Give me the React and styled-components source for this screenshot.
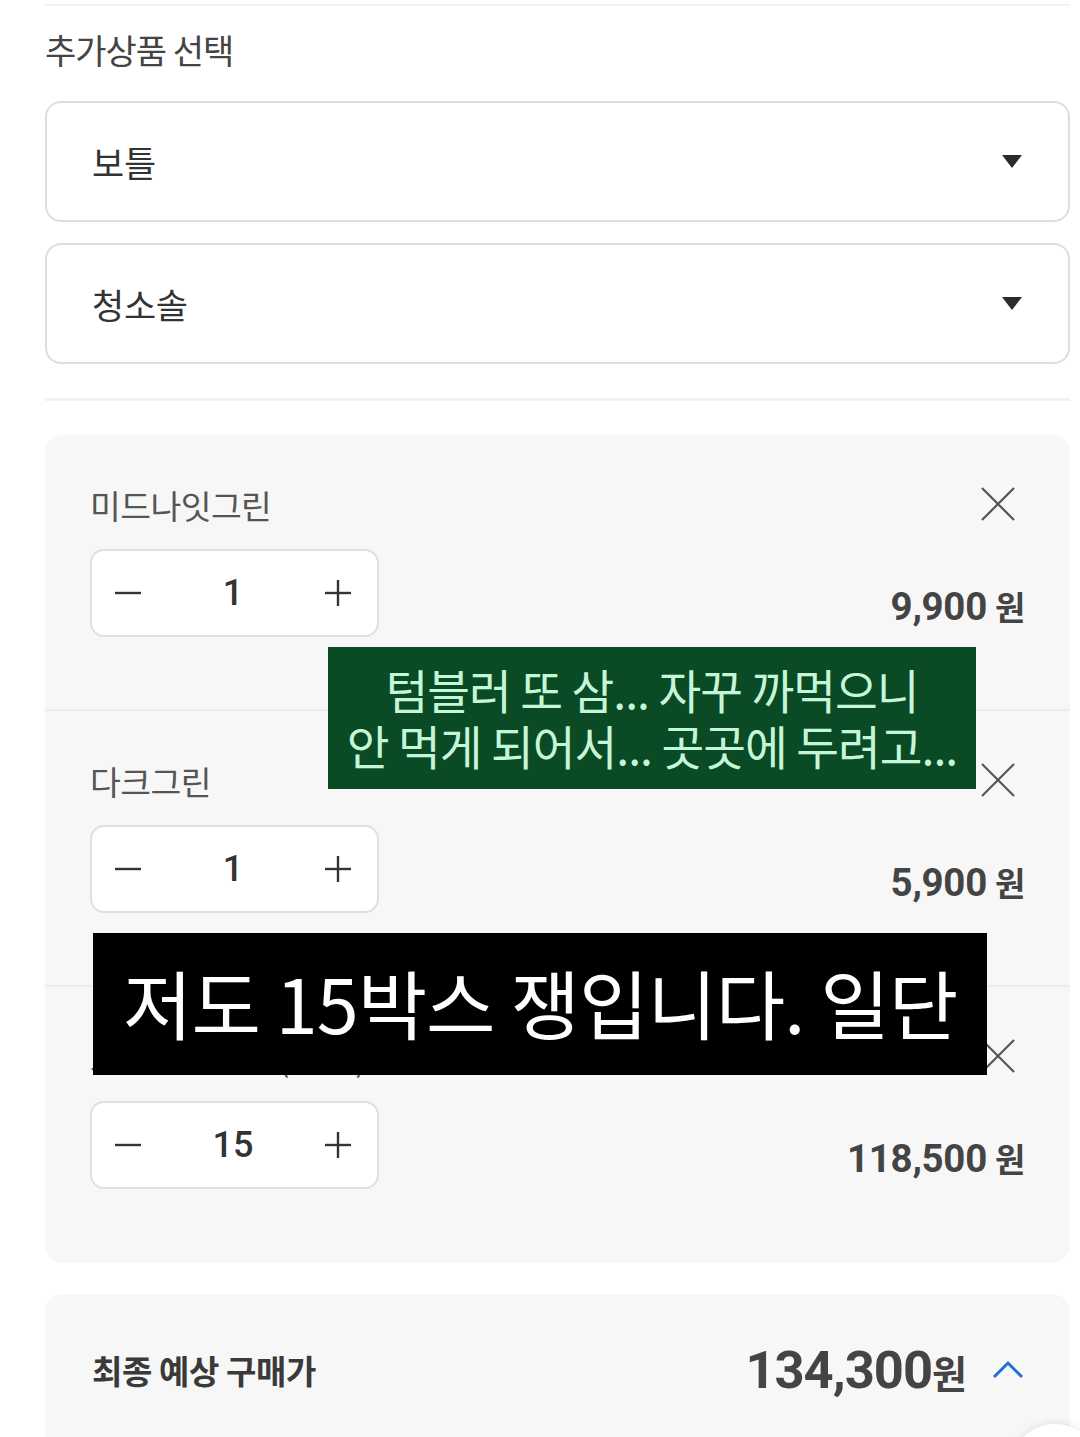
import React from "react";
import styled, { createGlobalStyle } from "styled-components";

const GlobalStyle = createGlobalStyle`
  html, body { margin: 0; padding: 0; background: #ffffff; }
  body { font-family: "Noto Sans CJK KR", "Noto Sans", sans-serif; color: #333; overflow: hidden; }
  * { box-sizing: border-box; }
`;

const Page = styled.div`
  position: relative;
  width: 1080px;
  height: 1437px;
  overflow: hidden;
  padding: 4px 10px 0 45px;
`;

const Rule = styled.div`
  height: ${(p) => p.$h || 2}px;
  background: #f3f3f3;
  margin-top: ${(p) => p.$mt || 0}px;
`;

const Title = styled.h2`
  margin: 22px 0 0;
  font-size: 34px;
  font-weight: 400;
  line-height: 44px;
  color: #444;
  letter-spacing: -1px;
`;

const Select = styled.div`
  display: flex;
  align-items: center;
  justify-content: space-between;
  height: 121px;
  margin-top: ${(p) => p.$mt}px;
  border: 2px solid #dedede;
  border-radius: 16px;
  padding: 0 46px 0 45px;
  font-size: 35px;
  color: #333;
  letter-spacing: -0.3px;
`;

const Caret = styled.span`
  width: 0;
  height: 0;
  border-left: 10px solid transparent;
  border-right: 10px solid transparent;
  border-top: 13px solid #2b2b2b;
`;

const Panel = styled.div`
  margin-top: ${(p) => p.$mt}px;
  background: #f7f7f7;
  border-radius: 18px;
  height: ${(p) => p.$h}px;
`;

const Item = styled.div`
  padding: 49px 45px 72px 45px;
  border-bottom: ${(p) => (p.$last ? "none" : "2px solid #ececec")};
`;

const NameRow = styled.div`
  display: flex;
  align-items: center;
  justify-content: space-between;
  height: 40px;
`;

const Name = styled.span`
  font-size: 33.5px;
  color: #555;
  letter-spacing: -0.6px;
`;

const CloseBtn = styled.svg`
  width: 36px;
  height: 36px;
  margin-right: 9px;
`;

const QtyRow = styled.div`
  display: flex;
  align-items: flex-end;
  justify-content: space-between;
  margin-top: 25px;
`;

const Stepper = styled.div`
  width: 289px;
  height: 88px;
  background: #fff;
  border: 2px solid #e0e0e0;
  border-radius: 14px;
  display: flex;
  align-items: center;
  justify-content: space-between;
  padding: 0 25px 0 22px;
`;

const Count = styled.span`
  font-size: 36px;
  font-weight: 500;
  color: #333;
  font-family: Roboto, "Noto Sans CJK KR", sans-serif;
`;

const StepIcon = styled.svg`
  width: 28px;
  height: 28px;
`;

const Price = styled.span`
  font-size: 38.5px;
  font-weight: 700;
  color: #444;
  line-height: 40px;
  margin-bottom: 10px;
  letter-spacing: -0.3px;
  font-family: Roboto, "Noto Sans CJK KR", sans-serif;
`;

const Won = styled.span`
  font-family: "Noto Sans CJK KR", sans-serif;
  font-size: 33px;
  margin-left: 8px;
`;

const TotalRow = styled.div`
  display: flex;
  align-items: center;
  justify-content: space-between;
  padding: 45px 45px 0 47px;
`;

const TotalLabel = styled.span`
  font-size: 33px;
  font-weight: 700;
  color: #3a3a3a;
  letter-spacing: -0.4px;
`;

const TotalRight = styled.div`
  display: flex;
  align-items: center;
  gap: 24px;
`;

const TotalPrice = styled.span`
  font-family: Roboto, "Noto Sans CJK KR", sans-serif;
  font-size: 52.5px;
  font-weight: 700;
  color: #444;
  letter-spacing: -1px;
`;

const TotalWon = styled.span`
  font-family: "Noto Sans CJK KR", sans-serif;
  font-size: 38px;
  letter-spacing: 0;
`;

const UpIcon = styled.svg`
  width: 34px;
  height: 34px;
`;

const GreenCaption = styled.div`
  position: absolute;
  left: 328px;
  top: 647px;
  width: 648px;
  height: 142px;
  background: #0a4a24;
  color: #c6f6da;
  font-size: 46.5px;
  line-height: 56px;
  text-align: center;
  padding-top: 14px;
  letter-spacing: -1px;
  white-space: nowrap;
`;

const BlackCaption = styled.div`
  position: absolute;
  left: 93px;
  top: 933px;
  width: 894px;
  height: 142px;
  background: #000;
  color: #fff;
  font-size: 75.5px;
  line-height: 100px;
  padding: 18px 0 0 30px;
  letter-spacing: -1px;
  white-space: nowrap;
`;

const FloatCircle = styled.div`
  position: absolute;
  left: 1010px;
  top: 1424px;
  width: 90px;
  height: 90px;
  border-radius: 50%;
  background: #fff;
  box-shadow: 0 0 8px rgba(0, 0, 0, 0.12);
`;

const Minus = () => (
  <StepIcon viewBox="0 0 28 28">
    <line x1="1" y1="14" x2="27" y2="14" stroke="#333" strokeWidth="2.4" />
  </StepIcon>
);

const Plus = () => (
  <StepIcon viewBox="0 0 28 28">
    <line x1="1" y1="14" x2="27" y2="14" stroke="#333" strokeWidth="2.4" />
    <line x1="14" y1="1" x2="14" y2="27" stroke="#333" strokeWidth="2.4" />
  </StepIcon>
);

const Close = () => (
  <CloseBtn viewBox="0 0 36 36">
    <line x1="2" y1="2" x2="34" y2="34" stroke="#555" strokeWidth="2.2" />
    <line x1="34" y1="2" x2="2" y2="34" stroke="#555" strokeWidth="2.2" />
  </CloseBtn>
);

const items = [
  { name: "미드나잇그린", qty: 1, price: "9,900" },
  { name: "다크그린", qty: 1, price: "5,900" },
  { name: "포레스트그린 (15개)", qty: 15, price: "118,500" },
];

export default function App() {
  return (
    <>
      <GlobalStyle />
      <Page>
        <Rule $h={2} />
        <Title>추가상품 선택</Title>
        <Select $mt={29}>
          <span>보틀</span>
          <Caret />
        </Select>
        <Select $mt={21}>
          <span>청소솔</span>
          <Caret />
        </Select>
        <Rule $h={3} $mt={34} />
        <Panel $mt={34} $h={828}>
          {items.map((it, i) => (
            <Item key={it.name} $last={i === items.length - 1}>
              <NameRow>
                <Name>{it.name}</Name>
                <Close />
              </NameRow>
              <QtyRow>
                <Stepper>
                  <Minus />
                  <Count>{it.qty}</Count>
                  <Plus />
                </Stepper>
                <Price>
                  {it.price}
                  <Won>원</Won>
                </Price>
              </QtyRow>
            </Item>
          ))}
        </Panel>
        <Panel $mt={31} $h={200}>
          <TotalRow>
            <TotalLabel>최종 예상 구매가</TotalLabel>
            <TotalRight>
              <TotalPrice>
                134,300<TotalWon>원</TotalWon>
              </TotalPrice>
              <UpIcon viewBox="0 0 34 34">
                <polyline points="3,24 17,10 31,24" fill="none" stroke="#1e73c8" strokeWidth="3" />
              </UpIcon>
            </TotalRight>
          </TotalRow>
        </Panel>
        <GreenCaption>
          텀블러 또 삼... 자꾸 까먹으니
          <br />
          안 먹게 되어서... 곳곳에 두려고...
        </GreenCaption>
        <BlackCaption>저도 15박스 쟁입니다. 일단</BlackCaption>
        <FloatCircle />
      </Page>
    </>
  );
}
